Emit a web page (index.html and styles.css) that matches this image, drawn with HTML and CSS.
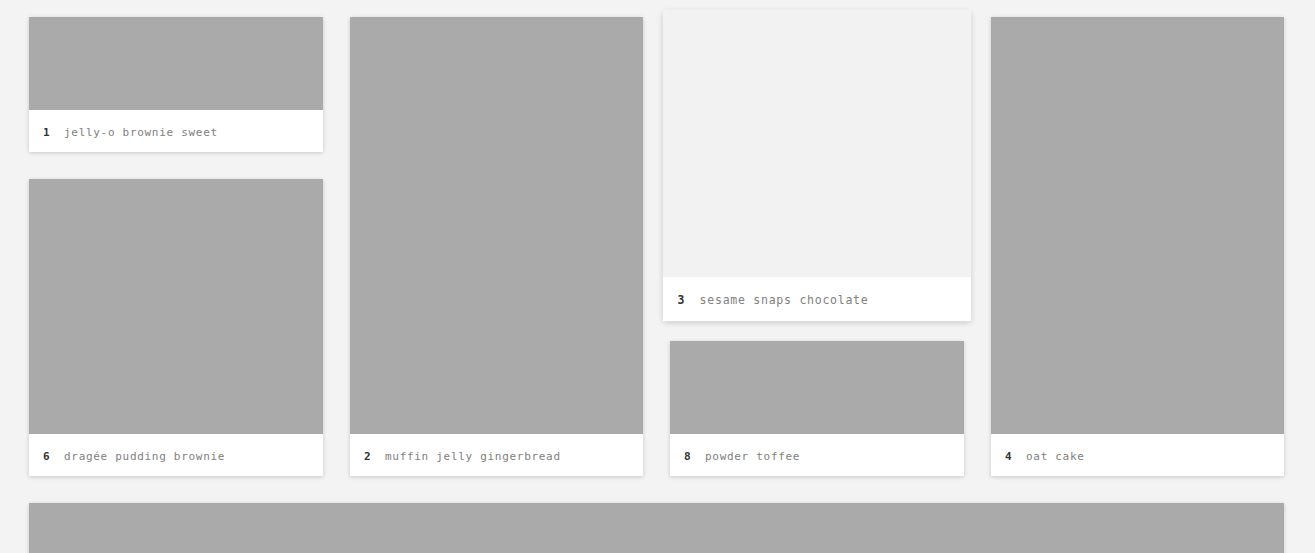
FILE: index.html
```html
<!DOCTYPE html>
<html>
<head>
<meta charset="utf-8">
<link rel="stylesheet" href="styles.css">
</head>
<body>
<div class="page">
  <div class="grid">
    <div class="col">
      <div class="card"><div class="img h93"></div><div class="cap"><span class="num">1</span><span class="txt">jelly-o brownie sweet</span></div></div>
      <div class="card"><div class="img h255"></div><div class="cap"><span class="num">6</span><span class="txt">dragée pudding brownie</span></div></div>
    </div>
    <div class="col">
      <div class="card"><div class="img h417"></div><div class="cap"><span class="num">2</span><span class="txt">muffin jelly gingerbread</span></div></div>
    </div>
    <div class="col">
      <div class="card hover"><div class="img h255"></div><div class="cap"><span class="num">3</span><span class="txt">sesame snaps chocolate</span></div></div>
      <div class="card"><div class="img h93"></div><div class="cap"><span class="num">8</span><span class="txt">powder toffee</span></div></div>
    </div>
    <div class="col">
      <div class="card"><div class="img h417"></div><div class="cap"><span class="num">4</span><span class="txt">oat cake</span></div></div>
    </div>
  </div>
  <div class="card wide"><div class="img h300"></div></div>
</div>
</body>
</html>
```
FILE: styles.css
```css
html, body { margin: 0; padding: 0; }
body {
  background: #f3f3f3;
  font-family: "DejaVu Sans Mono", "Liberation Mono", monospace;
  overflow: hidden;
}
.page {
  padding: 17px 31px 0 29px;
}
.grid {
  display: grid;
  grid-template-columns: 294px 293px 294px 293px;
  column-gap: 27px;
  align-items: start;
}
.col {
  display: flex;
  flex-direction: column;
  gap: 27px;
}
.card {
  background: #fff;
  box-shadow: 0 1px 4px rgba(0,0,0,0.18);
}
.card.hover {
  transform: scale(1.048);
  box-shadow: 0 2px 6px rgba(0,0,0,0.2);
  position: relative;
  z-index: 2;
}
.card.hover .img { background: #f2f2f2; }
.img { background: #aaaaaa; }
.h93 { height: 93px; }
.h255 { height: 255px; }
.h417 { height: 417px; }
.h300 { height: 300px; }
.cap {
  box-sizing: border-box;
  height: 42px;
  display: flex;
  align-items: center;
  padding: 2px 0 0 14px;
  font-size: 11px;
  letter-spacing: 0.7px;
}
.num {
  color: #333;
  font-weight: bold;
  width: 21px;
}
.txt { color: #808080; }
.wide { margin-top: 27px; }
```
